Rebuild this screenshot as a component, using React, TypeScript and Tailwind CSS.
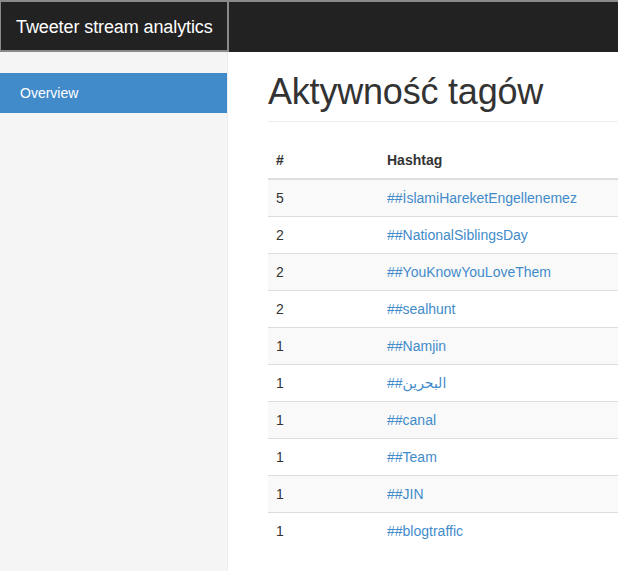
import React from 'react';

const rows: { count: number; tag: string }[] = [
  { count: 5, tag: '##İslamiHareketEngellenemez' },
  { count: 2, tag: '##NationalSiblingsDay' },
  { count: 2, tag: '##YouKnowYouLoveThem' },
  { count: 2, tag: '##sealhunt' },
  { count: 1, tag: '##Namjin' },
  { count: 1, tag: '##البحرين' },
  { count: 1, tag: '##canal' },
  { count: 1, tag: '##Team' },
  { count: 1, tag: '##JIN' },
  { count: 1, tag: '##blogtraffic' },
];

const App: React.FC = () => {
  return (
    <div className="min-h-[571px] flex flex-col bg-white text-[14px] text-[#333] font-['Liberation_Sans','DejaVu_Sans',sans-serif]">
      <nav className="h-[52px] flex bg-[#222] border-t-2 border-[#8a8a8a]">
        <a className="w-[229px] shrink-0 h-[50px] flex items-center px-[15px] pt-[3px] text-[18px] text-white whitespace-nowrap tracking-[-0.1px] border-r-2 border-b-2 border-l border-[#8a8a8a]">
          Tweeter stream analytics
        </a>
      </nav>

      <div className="flex flex-1">
        <aside className="w-[228px] shrink-0 bg-[#f5f5f5] border-r border-[#eee] pt-[21px]">
          <ul>
            <li className="h-[40px] flex items-center px-[20px] pt-[1px] bg-[#428bca] text-white">Overview</li>
          </ul>
        </aside>

        <main className="flex-1 pl-[40px] overflow-hidden">
          <h1 className="mt-[20px] mb-[20px] pb-[9px] border-b border-[#eee] text-[36px] leading-[1.1] text-[#333] tracking-[-0.2px]">
            Aktywność tagów
          </h1>

          <table className="w-full border-collapse">
            <thead>
              <tr>
                <th className="w-[111px] text-left font-bold px-[8px] py-[8px] leading-[20px] border-b-2 border-[#ddd]">#</th>
                <th className="text-left font-bold px-[8px] py-[8px] leading-[20px] border-b-2 border-[#ddd]">Hashtag</th>
              </tr>
            </thead>
            <tbody>
              {rows.map((r, i) => (
                <tr key={i} className={i % 2 === 0 ? 'bg-[#f9f9f9]' : ''}>
                  <td className={`px-[8px] py-[8px] leading-[20px] ${i > 0 ? 'border-t border-[#ddd]' : ''}`}>{r.count}</td>
                  <td className={`px-[8px] py-[8px] leading-[20px] ${i > 0 ? 'border-t border-[#ddd]' : ''}`}>
                    <a className="text-[#428bca]">{r.tag}</a>
                  </td>
                </tr>
              ))}
            </tbody>
          </table>
        </main>
      </div>
    </div>
  );
};

export default App;
